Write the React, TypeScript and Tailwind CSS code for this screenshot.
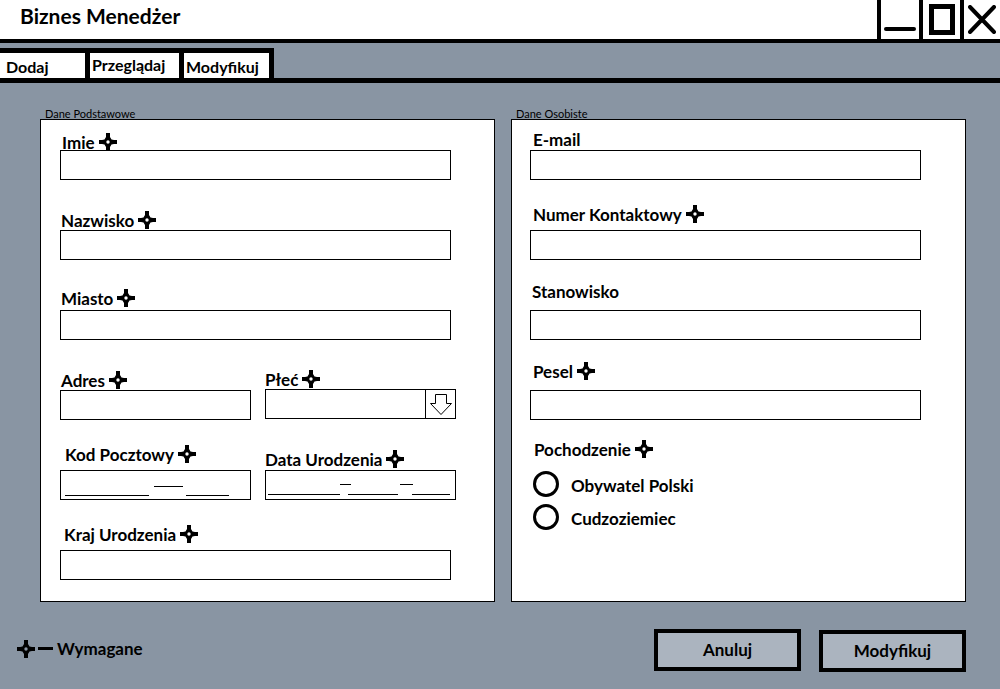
import type { ReactNode } from "react";

const FONT = "font-['Lato','Carlito','Liberation_Sans',sans-serif]";

function RequiredMark({ className = "" }: { className?: string }) {
  return (
    <svg viewBox="0 0 18 18" className={`h-[18px] w-[18px] shrink-0 ${className}`} aria-hidden="true">
      <path
        fillRule="evenodd"
        d="M7 0h4v4l1.5 2.5L15 7h3v4h-3l-2.500.5L11 14v4H7v-4l-1.500-2.500L3 11H0V7h3l2.500-.5L7 4zM9 7.300a1.700 1.700 0 1 0 0 3.400a1.700 1.700 0 0 0 0-3.400z"
      />
    </svg>
  );
}

function Box({ className = "", children }: { className?: string; children?: ReactNode }) {
  return <div className={`h-[30px] border border-black bg-white ${className}`}>{children}</div>;
}

type FieldProps = {
  label: string;
  required?: boolean;
  // nudges for a hand-drawn mockup: nothing in the picture lines up exactly
  labelClass?: string;
  className?: string;
  children?: ReactNode;
};

function Field({ label, required, labelClass = "", className = "", children }: FieldProps) {
  return (
    <div className={`flex flex-col justify-end ${className}`}>
      <div className={`flex h-[20px] items-center gap-[4px] text-[17px] font-bold leading-none text-black ${labelClass}`}>
        <span>{label}</span>
        {required && <RequiredMark />}
      </div>
      {children ?? <Box className="w-[391px]" />}
    </div>
  );
}

function Panel({ legend, children }: { legend: string; children: ReactNode }) {
  return (
    <section className="w-[455px]">
      <div className="h-[12px] overflow-hidden pl-[5px] text-[11px] leading-[13px] text-black">{legend}</div>
      <div className="h-[483px] border border-black bg-white">{children}</div>
    </section>
  );
}

function PostalMask() {
  return (
    <svg viewBox="0 0 189 28" className="h-full w-full" stroke="black" aria-hidden="true">
      <path d="M4 24.500h84M93 15.500h29M125 24.500h43" />
    </svg>
  );
}

function DateMask() {
  return (
    <svg viewBox="0 0 189 28" className="h-full w-full" stroke="black" aria-hidden="true">
      <path d="M2 23.500h72M74 13.500h11M82 23.500h50M134 13.500h13M146 23.500h38" />
    </svg>
  );
}

function Select() {
  return (
    <Box className="flex w-[191px] justify-end">
      <div className="flex w-[30px] items-center justify-center border-l border-black">
        <svg viewBox="0 0 22 21" className="h-[21px] w-[22px]" fill="none" stroke="black" aria-hidden="true">
          <path d="M5.500.500h11v9h5l-10.500 11l-10.500-11h5z" />
        </svg>
      </div>
    </Box>
  );
}

function Radio({ label, className = "" }: { label: string; className?: string }) {
  return (
    <div className={`flex h-[33px] items-center ${className}`}>
      <span className="h-[26px] w-[26px] rounded-full border-[3px] border-black bg-white" />
      <span className="ml-[12px] mt-[3px] text-[17px] font-bold leading-none">{label}</span>
    </div>
  );
}

function WindowButton({ width, children }: { width: string; children: ReactNode }) {
  return (
    <div className={`flex h-full items-center justify-center border-l-4 border-black ${width}`}>{children}</div>
  );
}

function ActionButton({ label, className = "" }: { label: string; className?: string }) {
  return (
    <button className={`h-[42px] w-[147px] border-[4px] border-black bg-[#abb4bf] text-[17px] font-bold text-black ${className}`}>
      {label}
    </button>
  );
}

export default function App() {
  return (
    <div className={`flex h-[689px] w-[1000px] flex-col overflow-hidden bg-[#8995a3] text-black ${FONT}`}>
      <header className="flex h-[43px] items-stretch justify-between border-b-4 border-black bg-white">
        <h1 className="pl-[20px] pt-[2px] text-[21px] font-bold leading-[28px]">Biznes Menedżer</h1>
        <div className="flex">
          <WindowButton width="w-[42px]">
            <span className="mt-[19px] h-[4px] w-[32px] rounded-full bg-black" />
          </WindowButton>
          <WindowButton width="w-[41px]">
            <span className="h-[31px] w-[26px] border-[5px] border-black" />
          </WindowButton>
          <WindowButton width="w-[40px]">
            <svg viewBox="0 0 28 29" className="h-[29px] w-[28px]" stroke="black" strokeWidth="4" strokeLinecap="round" aria-hidden="true">
              <path d="M2 2l24 25M26 2L2 27" />
            </svg>
          </WindowButton>
        </div>
      </header>

      <nav className="mt-[5px] flex h-[35px] w-full border-b-[5px] border-black">
        <div className="flex border-r-[5px] border-t-[5px] border-black text-[16px] font-bold">
          <div className="w-[90px] border-r-[5px] border-black bg-white pl-[6px] pt-[2px]">Dodaj</div>
          <div className="w-[94px] border-r-[5px] border-black bg-white pl-[2px]">Przeglądaj</div>
          <div className="w-[85px] bg-white pl-[2px] pt-[2px]">Modyfikuj</div>
        </div>
      </nav>

      <main className="flex flex-1 flex-col pl-[40px] pt-[24px]">
        <div className="flex gap-[16px]">
          <Panel legend="Dane Podstawowe">
            <div className="grid grid-cols-[205px_205px] grid-rows-[60px_80px_80px_80px_80px_80px] pl-[19px]">
              <Field label="Imie" required className="col-span-2" labelClass="ml-[2px] mb-[-2px]" />
              <Field label="Nazwisko" required className="col-span-2" labelClass="ml-[1px]" />
              <Field label="Miasto" required className="col-span-2" labelClass="ml-[1px] mb-[2px]" />
              <Field label="Adres" required labelClass="ml-[1px]">
                <Box className="w-[191px]" />
              </Field>
              <Field label="Płeć" required className="pb-[1px]">
                <Select />
              </Field>
              <Field label="Kod Pocztowy" required labelClass="ml-[5px] mb-[6px]">
                <Box className="w-[191px]">
                  <PostalMask />
                </Box>
              </Field>
              <Field label="Data Urodzenia" required labelClass="mb-[1px]">
                <Box className="w-[191px]">
                  <DateMask />
                </Box>
              </Field>
              <Field label="Kraj Urodzenia" required className="col-span-2" labelClass="ml-[4px] mb-[6px]" />
            </div>
          </Panel>

          <Panel legend="Dane Osobiste">
            <div className="grid grid-rows-[60px_80px_80px_80px] pl-[18px]">
              <Field label="E-mail" labelClass="ml-[3px] mb-[1px]" />
              <Field label="Numer Kontaktowy" required labelClass="ml-[3px] mb-[6px]" />
              <Field label="Stanowisko" labelClass="ml-[2px] mb-[9px]" />
              <Field label="Pesel" required labelClass="ml-[3px] mb-[9px]" />
            </div>
            <div className="ml-[21px] mt-[19px] flex flex-col">
              <div className="flex h-[20px] items-center gap-[4px] text-[17px] font-bold leading-none">
                <span className="ml-[1px]">Pochodzenie</span>
                <RequiredMark />
              </div>
              <Radio label="Obywatel Polski" className="mt-[8px]" />
              <Radio label="Cudzoziemiec" />
            </div>
          </Panel>
        </div>

        <footer className="-ml-[23px] mt-[27px] flex items-start justify-between pr-[34px]">
          <div className="mt-[7px] flex items-center text-[17px] font-bold">
            <RequiredMark />
            <span className="ml-[3px] mr-[4px] h-[3px] w-[15px] bg-black" />
            <span>Wymagane</span>
          </div>
          <div className="flex gap-[18px]">
            <ActionButton label="Anuluj" />
            <ActionButton label="Modyfikuj" className="mt-[1px]" />
          </div>
        </footer>
      </main>
    </div>
  );
}
